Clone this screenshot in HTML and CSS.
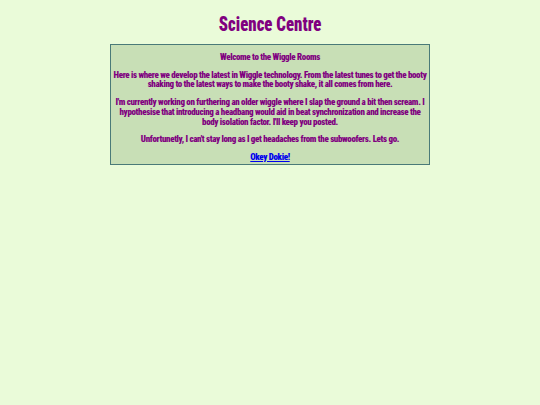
FILE: index.html
```html
<!DOCTYPE html>
<html><head><link rel="stylesheet" href="styles.css"></head>
<body>
<h1 class="title"><span class="title-text">Science Centre</span></h1>
<div class="box">
<p>Welcome to the Wiggle Rooms</p>
<p>Here is where we develop the latest in Wiggle technology. From the latest tunes to get the booty shaking to the latest ways to make the booty shake, it all comes from here.</p>
<p>I'm currently working on furthering an older wiggle where I slap the ground a bit then scream. I hypothesise that introducing a headbang would aid in beat synchronization and increase the body isolation factor. I'll keep you posted.</p>
<p>Unfortunetly, I can't stay long as I get headaches from the subwoofers. Lets go.</p>
<p class="last"><a href="#" class="link">Okey Dokie!</a></p>
</div>
</body></html>
```
FILE: styles.css
```css
html,body{margin:0;padding:0;}
body{background:#eafbd9;font-family:Impact,Roboto,sans-serif;font-weight:900;font-stretch:75%;color:#800080;padding-top:12px;}
.title{margin:0 0 8px;text-align:center;font-size:21px;line-height:24px;font-weight:900;}
.title-text{display:inline-block;transform:scaleX(0.8);}
.box{width:318px;margin:0 auto;background:#c8dfb6;border:1px solid #4a7a78;text-align:center;font-size:9px;letter-spacing:-0.35px;line-height:9.7px;padding:0;}
.box p{margin:8px 2px;}
.box p.last{margin-bottom:1px;}
.link{color:#0000ee;text-decoration:underline;}
```
